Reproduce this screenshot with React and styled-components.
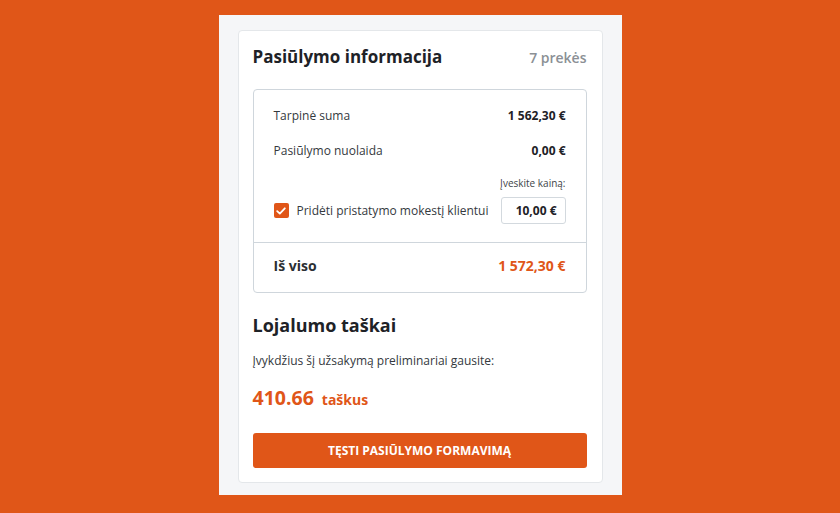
import styled, { createGlobalStyle } from "styled-components";

const orange = "#e05618";

const Global = createGlobalStyle`
    html, body {
        margin: 0;
        padding: 0;
        background: ${orange};
        font-family: "Open Sans", "Noto Sans", sans-serif;
        color: #2b2f33;
    }
`;

const Page = styled.div`
    width: 840px;
    height: 513px;
    padding-top: 15px;
    box-sizing: border-box;
`;

const Panel = styled.div`
    width: 403px;
    height: 480px;
    margin: 0 auto;
    background: #f5f6f8;
    padding: 15px 19px 12px;
    box-sizing: border-box;
`;

const Card = styled.div`
    background: #fff;
    border: 1px solid #e4e7ea;
    border-radius: 4px;
    padding: 14px 15px 14px 14px;
    box-sizing: border-box;
    height: 100%;
`;

const Header = styled.div`
    display: flex;
    justify-content: space-between;
    align-items: baseline;
    height: 24px;
    margin-bottom: 20px;
`;

const Title = styled.h2`
    margin: 0;
    font-size: 17px;
    font-weight: 700;
    color: #1e2227;
    line-height: 24px;
`;

const Count = styled.span`
    font-size: 14px;
    color: #8b9095;
    font-weight: 600;
`;

const Summary = styled.div`
    border: 1px solid #cfd6dc;
    border-radius: 4px;
`;

const Rows = styled.div`
    padding: 16px 20px 18px 20px;
    display: flex;
    flex-direction: column;
`;

const Row = styled.div`
    display: flex;
    justify-content: space-between;
    align-items: center;
    font-size: 12px;
    line-height: 20px;
    margin-bottom: ${(p) => p.gap || 0}px;
`;

const Label = styled.span`
    color: #34393e;
`;

const Value = styled.span`
    font-weight: 700;
    color: #1e2227;
    font-size: 12px;
`;

const Hint = styled.div`
    text-align: right;
    font-size: 10px;
    color: #3e4348;
    line-height: 14px;
    margin-bottom: 7px;
`;

const Check = styled.label`
    display: flex;
    align-items: center;
    gap: 8px;
    font-size: 12px;
    color: #34393e;
`;

const Box = styled.span`
    width: 15px;
    height: 15px;
    border-radius: 2px;
    background: ${orange};
    display: flex;
    align-items: center;
    justify-content: center;
`;

const PriceInput = styled.div`
    width: 65px;
    height: 27px;
    box-sizing: border-box;
    border: 1px solid #d3d9de;
    border-radius: 3px;
    display: flex;
    align-items: center;
    justify-content: flex-end;
    padding-right: 8px;
    font-size: 12px;
    font-weight: 700;
    color: #1e2227;
`;

const Total = styled.div`
    border-top: 1px solid #cfd6dc;
    padding: 12px 20px 15px 20px;
    display: flex;
    justify-content: space-between;
    align-items: center;
    line-height: 22px;
    font-weight: 700;
    font-size: 14px;
`;

const TotalValue = styled.span`
    color: ${orange};
`;

const Section = styled.h3`
    margin: 20px 0 0;
    font-size: 18px;
    line-height: 24px;
    font-weight: 700;
    color: #1e2227;
`;

const Text = styled.p`
    margin: 14px 0 0;
    font-size: 12px;
    line-height: 20px;
    color: #34393e;
`;

const Points = styled.div`
    margin-top: 14px;
    display: flex;
    align-items: baseline;
    gap: 8px;
    color: ${orange};
    font-weight: 700;
    line-height: 26px;
`;

const Big = styled.span`
    font-size: 19.5px;
`;

const Small = styled.span`
    font-size: 14px;
`;

const Button = styled.button`
    margin-top: 20px;
    width: 100%;
    height: 35px;
    border: none;
    border-radius: 3px;
    background: ${orange};
    color: #fff;
    font-family: inherit;
    font-size: 12px;
    font-weight: 700;
    text-transform: uppercase;
    cursor: pointer;
`;

const App = () => (
    <Page>
        <Global />
        <Panel>
            <Card>
                <Header>
                    <Title>Pasiūlymo informacija</Title>
                    <Count>7 prekės</Count>
                </Header>
                <Summary>
                    <Rows>
                        <Row gap={15}>
                            <Label>Tarpinė suma</Label>
                            <Value>1 562,30 €</Value>
                        </Row>
                        <Row gap={15}>
                            <Label>Pasiūlymo nuolaida</Label>
                            <Value>0,00 €</Value>
                        </Row>
                        <Hint>Įveskite kainą:</Hint>
                        <Row>
                            <Check>
                                <Box>
                                    <svg width="10" height="8" viewBox="0 0 10 8">
                                        <path
                                            d="M1.2 4.2 L3.8 6.6 L8.8 1.3"
                                            fill="none"
                                            stroke="#fff"
                                            strokeWidth="1.8"
                                            strokeLinecap="round"
                                            strokeLinejoin="round"
                                        />
                                    </svg>
                                </Box>
                                Pridėti pristatymo mokestį klientui
                            </Check>
                            <PriceInput>10,00 €</PriceInput>
                        </Row>
                    </Rows>
                    <Total>
                        <span>Iš viso</span>
                        <TotalValue>1 572,30 €</TotalValue>
                    </Total>
                </Summary>
                <Section>Lojalumo taškai</Section>
                <Text>Įvykdžius šį užsakymą preliminariai gausite:</Text>
                <Points>
                    <Big>410.66</Big>
                    <Small>taškus</Small>
                </Points>
                <Button>Tęsti pasiūlymo formavimą</Button>
            </Card>
        </Panel>
    </Page>
);

export default App;
